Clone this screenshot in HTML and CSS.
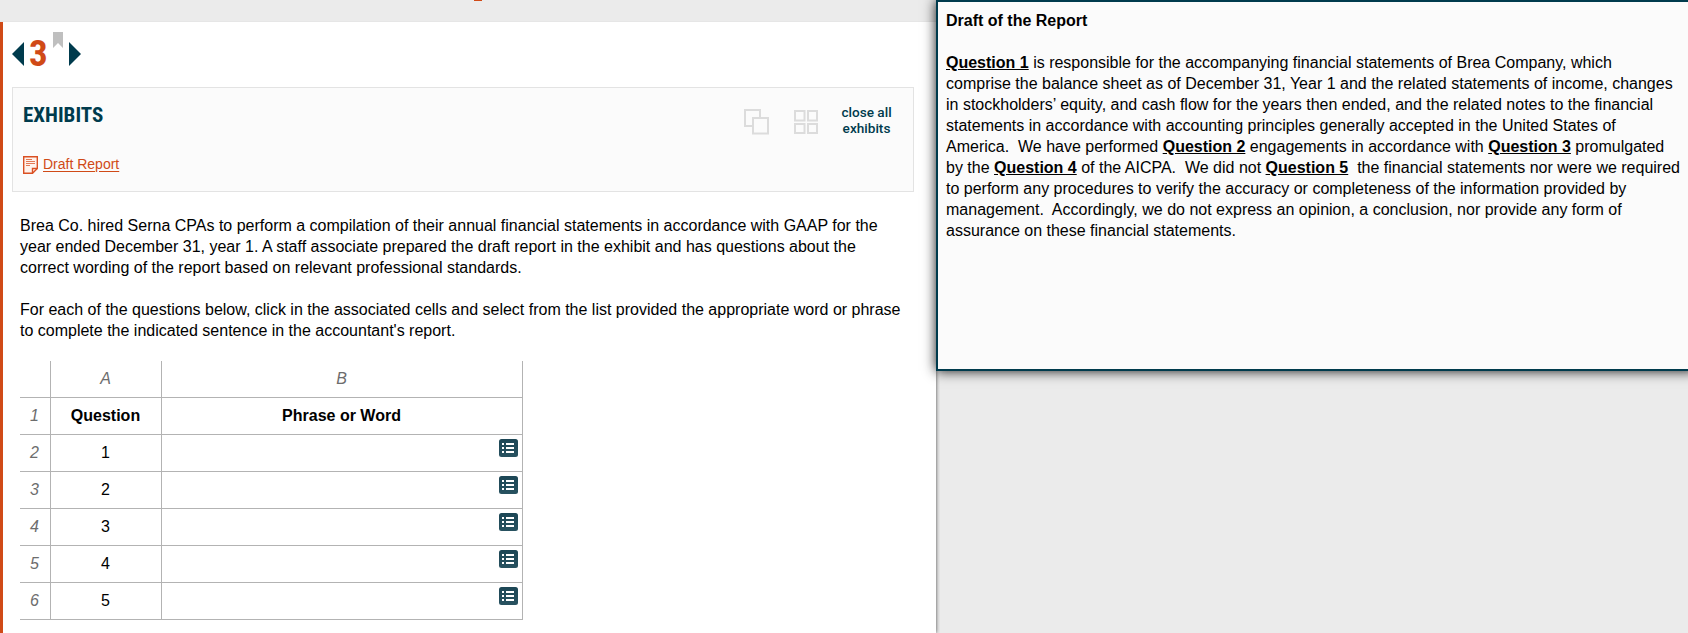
FILE: index.html
```html
<!DOCTYPE html>
<html lang="en">
<head>
<meta charset="utf-8">
<title>Exhibits</title>
<link rel="stylesheet" href="styles.css">
</head>
<body>
<svg width="0" height="0" class="defs">
  <defs>
    <linearGradient id="btn" x1="0" y1="0" x2="0" y2="1"><stop offset="0" stop-color="#1c4655"/><stop offset="1" stop-color="#285260"/></linearGradient>
    <symbol id="list" viewBox="0 0 19 18">
      <rect width="19" height="18" rx="2.5" fill="url(#btn)"/>
      <path fill="#fff" d="M3 4h2v2H3zM7 4h8v2H7zM3 8h2v2H3zM7 8h8v2H7zM3 12h2v2H3zM7 12h8v2H7z"/>
    </symbol>
  </defs>
</svg>
<div class="topbar"><i class="topmark"></i></div>
<div class="main">
  <section class="question">
    <nav class="pager">
      <svg width="12" height="24" class="prev"><path d="M12 0v24L0 12z" fill="#003b4d"/></svg>
      <span class="number">3</span>
      <svg width="10" height="16" class="bookmark"><path d="M0 0h10v16L5 11 0 16z" fill="#bfbfbf"/></svg>
      <svg width="12" height="24" class="next"><path d="M0 0v24L12 12z" fill="#003b4d"/></svg>
    </nav>
    <div class="exhibits">
      <div class="files">
        <h2 class="title">EXHIBITS</h2>
        <a class="file">
          <svg width="15" height="18" viewBox="0 0 15 18" fill="none" stroke="#da5023" stroke-width="1.4"><path d="M.7.7h13.6v11.8l-4.8 4.8H.7z" fill="#fff2ec"/><path d="M14.3 12.5H9.5v4.8"/><path d="M3 3.5h6M3 5.5h9M3 7.5h9M3 9.5h4" stroke-width="1" opacity=".75"/></svg>
          <span class="filename">Draft Report</span>
        </a>
      </div>
      <div class="tools">
        <svg width="25" height="26" viewBox="0 0 25 26" fill="none" stroke="#dcdcdc" stroke-width="2"><path d="M8 17H1V1h15v7"/><rect x="9" y="9" width="15" height="15.5"/></svg>
        <svg width="24" height="24" viewBox="0 0 24 24" fill="none" stroke="#dcdcdc" stroke-width="2" class="grid"><rect x="1" y="1" width="9.5" height="9.5"/><rect x="14" y="1" width="9" height="9.5"/><rect x="1" y="14" width="9.5" height="9"/><rect x="14" y="14" width="9" height="9"/></svg>
        <span class="close">close all<br>exhibits</span>
      </div>
    </div>
    <div class="prompt">
      <p>Brea Co. hired Serna CPAs to perform a compilation of their annual financial statements in accordance with GAAP for the<br>year ended December 31, year 1. A staff associate prepared the draft report in the exhibit and has questions about the<br>correct wording of the report based on relevant professional standards.</p>
      <p>For each of the questions below, click in the associated cells and select from the list provided the appropriate word or phrase<br>to complete the indicated sentence in the accountant's report.</p>
    </div>
    <div class="sheet">
      <div class="head"></div><div class="head">A</div><div class="head">B</div>
      <div class="head">1</div><div class="bold">Question</div><div class="bold">Phrase or Word</div>
      <div class="head">2</div><div>1</div><div class="pick"><svg width="19" height="18"><use href="#list"/></svg></div>
      <div class="head">3</div><div>2</div><div class="pick"><svg width="19" height="18"><use href="#list"/></svg></div>
      <div class="head">4</div><div>3</div><div class="pick"><svg width="19" height="18"><use href="#list"/></svg></div>
      <div class="head">5</div><div>4</div><div class="pick"><svg width="19" height="18"><use href="#list"/></svg></div>
      <div class="head">6</div><div>5</div><div class="pick"><svg width="19" height="18"><use href="#list"/></svg></div>
    </div>
  </section>
</div>
<aside class="report">
  <p><b>Draft of the Report</b></p>
  <p><b><u>Question 1</u></b> is responsible for the accompanying financial statements of Brea Company, which<br>comprise the balance sheet as of December 31, Year 1 and the related statements of income, changes<br>in stockholders’ equity, and cash flow for the years then ended, and the related notes to the financial<br>statements in accordance with accounting principles generally accepted in the United States of<br>America.&nbsp; We have performed <b><u>Question 2</u></b> engagements in accordance with <b><u>Question 3</u></b> promulgated<br>by the <b><u>Question 4</u></b> of the AICPA.&nbsp; We did not <b><u>Question 5</u></b>&nbsp; the financial statements nor were we required<br>to perform any procedures to verify the accuracy or completeness of the information provided by<br>management.&nbsp; Accordingly, we do not express an opinion, a conclusion, nor provide any form of<br>assurance on these financial statements.</p>
</aside>
</body>
</html>
```
FILE: styles.css
```css
* { box-sizing: border-box; }
body {
  margin: 0;
  height: 633px;
  overflow: hidden;
  background: #ebebeb;
  color: #000;
  font: 16px/21px "Liberation Sans", Arial, sans-serif;
}
p { margin: 0 0 21px; white-space: nowrap; }
svg { display: block; flex: none; }
.defs { position: absolute; }
.topbar { height: 22px; padding-left: 474px; box-shadow: inset 0 -1px #e6e6e6; }
.topmark { display: block; width: 8px; height: 1px; background: #d04a17; }
.main { height: 611px; }
.question {
  width: 936px;
  height: 611px;
  padding-left: 9px;
  border-left: 3px solid #d04a17;
  background: #fff;
  box-shadow: 0 0 4px rgba(0, 0, 0, .7);
  clip-path: inset(0 -4px 0 0);
}
.pager { display: flex; height: 65px; padding-top: 10px; }
.prev { margin-top: 10px; }
.number {
  width: 17px;
  margin: 7px 0 0 5px;
  color: #d04a17;
  font: bold 37px/30px "Roboto Condensed", Roboto, sans-serif;
}
.bookmark { margin-left: 7px; }
.next { margin: 10px 0 0 6px; }
.exhibits {
  display: flex;
  justify-content: space-between;
  width: 902px;
  height: 105px;
  border: 1px solid #e3e3e3;
  background: #fbfbfb;
}
.files { padding: 15px 0 0 10px; }
.title {
  margin: 0;
  color: #003b4d;
  font: bold 21px/24px "Roboto Condensed", Roboto, sans-serif;
}
.file { display: flex; gap: 5px; margin-top: 29px; color: #d04a17; font-size: 14px; line-height: 16px; }
.filename { text-decoration: underline; text-underline-offset: 2px; }
.tools { display: flex; padding: 21px 21px 0 0; }
.grid { margin: 1px 0 0 25px; }
.close {
  width: 51px;
  margin: -5px 0 0 23px;
  color: #003b4d;
  text-align: center;
  white-space: nowrap;
  font: 500 13.6px/16px Roboto, sans-serif;
}
.prompt { padding: 23px 0 0 8px; }
.sheet {
  display: grid;
  grid-template-columns: 31px 111px 361px;
  grid-auto-rows: 37px;
  width: 503px;
  margin: -1px 0 0 8px;
}
.sheet > div {
  padding-right: 1px;
  border: solid #b3b3b3;
  border-width: 0 1px 1px 0;
  text-align: center;
  line-height: 35px;
}
.sheet > .head { color: #6d6d6d; font-style: italic; }
.sheet > .bold { font-weight: bold; }
.sheet > .pick { display: flex; justify-content: flex-end; padding: 4px 4px 0 0; }
.report {
  position: absolute;
  top: 0;
  left: 936px;
  width: 760px;
  height: 371px;
  padding: 8px 0 0 8px;
  border: 2px solid #003b4d;
  background: #fbfbfb;
  box-shadow: 0 0 12px rgba(0, 0, 0, .9);
}
```
